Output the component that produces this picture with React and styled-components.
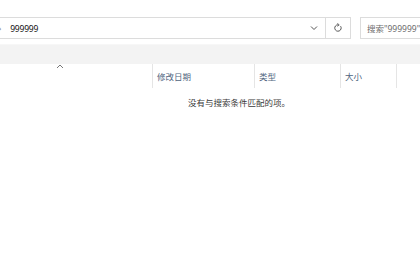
import styled, { createGlobalStyle } from 'styled-components'

const Global = createGlobalStyle`
  html, body { margin: 0; padding: 0; background: #ffffff; }
  body {
    width: 420px;
    height: 280px;
    overflow: hidden;
    font-family: "Noto Sans", "Noto Sans CJK SC", sans-serif;
    font-size: 8.5px;
  }
`

const Window = styled.div`
  width: 420px;
  height: 280px;
  display: flex;
  flex-direction: column;
  background: #ffffff;
`

const NavBar = styled.div`
  display: flex;
  align-items: center;
  gap: 9px;
  padding: 17px 0 0 0;
  height: 22px;
  box-sizing: content-box;
`

const Address = styled.div`
  margin-left: -6px;
  width: 357px;
  height: 22px;
  box-sizing: border-box;
  border: 1px solid #dcdcdc;
  display: flex;
  align-items: center;
`

const Crumb = styled.span`
  color: #777;
  font-size: 7px;
  margin-left: 4px;
`

const Path = styled.span`
  flex: 1;
  margin-left: 9px;
  color: #111;
  font-family: "Noto Sans", sans-serif;
  font-size: 8.5px;
  letter-spacing: -0.2px;
`

const IconCell = styled.div`
  width: ${p => p.w}px;
  height: 100%;
  display: flex;
  align-items: center;
  justify-content: center;
  border-left: ${p => (p.sep ? '1px solid #dcdcdc' : 'none')};
`

const Search = styled.div`
  flex: 1;
  height: 22px;
  box-sizing: border-box;
  border: 1px solid #dcdcdc;
  border-right: none;
  display: flex;
  align-items: center;
  padding-left: 6px;
  color: #6d6d6d;
  white-space: nowrap;
  overflow: hidden;
  font-size: 8.5px;
`

const CommandBand = styled.div`
  margin-top: 5px;
  height: 19px;
  background: #f3f3f3;
  border-top: 1px solid #f7f7f7;
`

const Header = styled.div`
  display: grid;
  grid-template-columns: 152px 102px 86px 56px 24px;
  height: 24px;
`

const HeadCell = styled.div`
  display: flex;
  align-items: center;
  padding-left: 4px;
  color: #4f6580;
  font-size: 8.5px;
  border-left: 1px solid #e5e5e5;
`

const SortCell = styled.div`
  display: flex;
  align-items: flex-start;
  padding-left: 56px;
`

const Empty = styled.div`
  text-align: center;
  color: #3a3a3a;
  font-size: 8.5px;
  margin-top: 8px;
  padding-left: 58px;
`

const Chevron = () => (
  <svg width="8" height="6" viewBox="0 0 8 6">
    <path d="M1 1.5 L4 4.5 L7 1.5" fill="none" stroke="#555" strokeWidth="1" />
  </svg>
)

const Refresh = () => (
  <svg width="10" height="10" viewBox="0 0 10 10">
    <path d="M7.6 3.2 A3.2 3.2 0 1 1 5 1.8" fill="none" stroke="#555" strokeWidth="1" />
    <path d="M4.4 0.4 L6.2 1.9 L4.4 3.3" fill="none" stroke="#555" strokeWidth="0.9" />
  </svg>
)

const SortUp = () => (
  <svg width="8" height="5" viewBox="0 0 8 5">
    <path d="M1 4 L4 1 L7 4" fill="none" stroke="#777" strokeWidth="1" />
  </svg>
)

export default function App() {
  return (
    <Window>
      <Global />
      <NavBar>
        <Address>
          <Crumb>›</Crumb>
          <Path>999999</Path>
          <IconCell w={22}><Chevron /></IconCell>
          <IconCell w={24} sep><Refresh /></IconCell>
        </Address>
        <Search>搜索"999999"</Search>
      </NavBar>
      <CommandBand />
      <Header>
        <SortCell><SortUp /></SortCell>
        <HeadCell>修改日期</HeadCell>
        <HeadCell>类型</HeadCell>
        <HeadCell>大小</HeadCell>
        <HeadCell />
      </Header>
      <Empty>没有与搜索条件匹配的项。</Empty>
    </Window>
  )
}
